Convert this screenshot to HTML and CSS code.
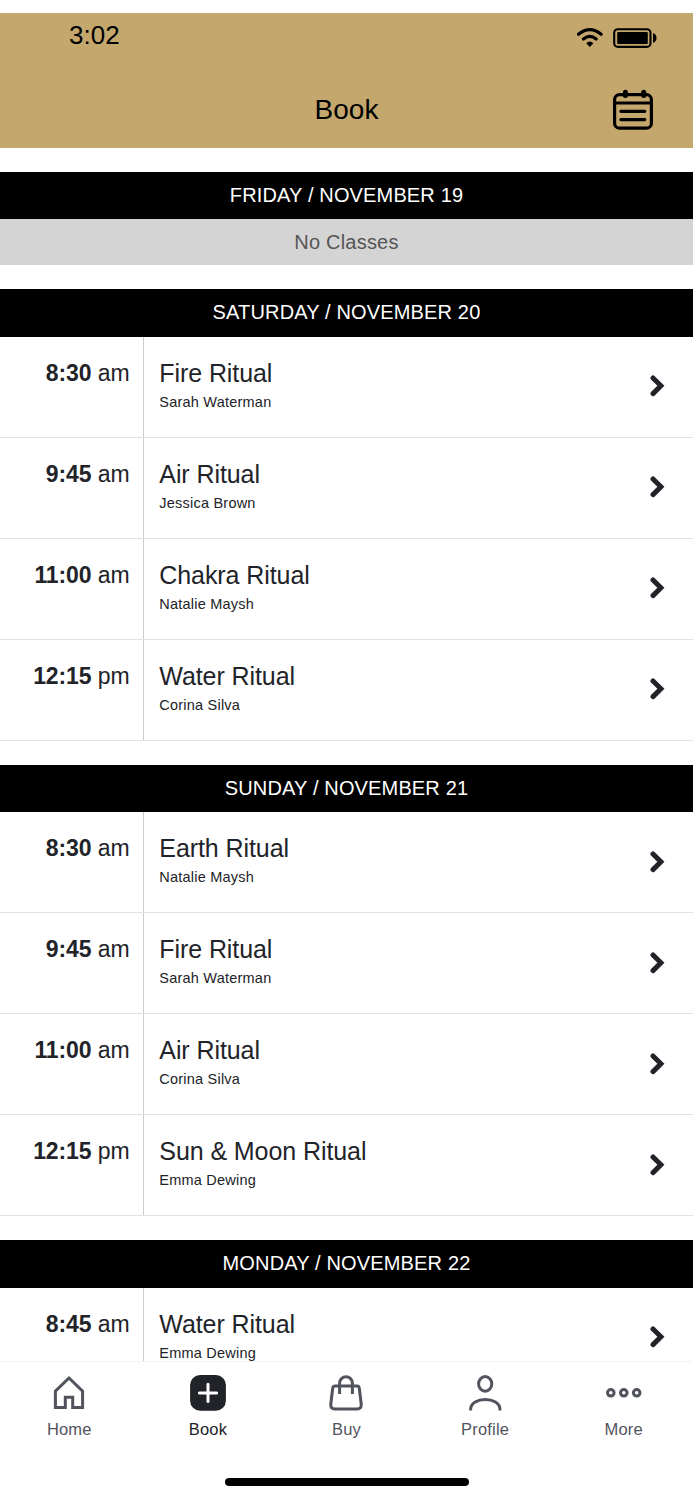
FILE: index.html
```
<!DOCTYPE html>
<html lang="en">
<head>
<meta charset="utf-8">
<title>Book</title>
<link rel="stylesheet" href="styles.css">
</head>
<body>
<div class="app">
  <header class="top">
    <div class="status">
      <span class="clock">3:02</span>
      <div class="status-icons">
        <svg width="27" height="21" viewBox="0 0 27 21" fill="none" stroke="#000" stroke-width="3.2" stroke-linecap="round">
          <path d="M1.5 7.3Q12.8-2 24.1 7.3"/>
          <path d="M6.4 12.1Q12.8 6.8 19.2 12.1"/>
          <path d="M9.2 16.2Q12.8 12.6 16.4 16.2L12.8 20Z" fill="#000" stroke="none"/>
        </svg>
        <svg width="44" height="20" viewBox="0 0 44 20">
          <rect x="1.2" y="1.2" width="36.3" height="17.7" rx="3.6" fill="none" stroke="#000" stroke-width="2.1"/>
          <rect x="4.2" y="4" width="30.6" height="12" rx="1" fill="#000"/>
          <path d="M40 5.3C42.2 5.6 43.5 7.7 43.5 10S42.2 14.4 40 14.7Z" fill="#000"/>
        </svg>
      </div>
    </div>
    <div class="titlebar">
      <h1>Book</h1>
      <svg class="calendar" width="42" height="42" viewBox="0 0 42 42" fill="none" stroke="#000" stroke-width="3.2" stroke-linecap="round">
        <rect x="2.6" y="5.6" width="36.8" height="33.6" rx="5"/>
        <path d="M3 14H39M8.9 22.3H32.8M8.9 30.6H32.8"/>
        <path d="M13.4 3.2V6.6M31.7 3.2V6.6" stroke-width="5"/>
      </svg>
    </div>
  </header>

  <main class="schedule">
    <section class="day">
      <h2>FRIDAY / NOVEMBER 19</h2>
      <p class="empty">No Classes</p>
    </section>
    <section class="day">
      <h2>SATURDAY / NOVEMBER 20</h2>
      <div class="row"><div class="time"><b>8:30</b> am</div><div class="info"><h3>Fire Ritual</h3><p>Sarah Waterman</p></div><svg class="chev" viewBox="0 0 16 22"><path d="M4 3L11.9 10.8L4 18.6"/></svg></div>
      <div class="row"><div class="time"><b>9:45</b> am</div><div class="info"><h3>Air Ritual</h3><p>Jessica Brown</p></div><svg class="chev" viewBox="0 0 16 22"><path d="M4 3L11.9 10.8L4 18.6"/></svg></div>
      <div class="row"><div class="time"><b>11:00</b> am</div><div class="info"><h3>Chakra Ritual</h3><p>Natalie Maysh</p></div><svg class="chev" viewBox="0 0 16 22"><path d="M4 3L11.9 10.8L4 18.6"/></svg></div>
      <div class="row"><div class="time"><b>12:15</b> pm</div><div class="info"><h3>Water Ritual</h3><p>Corina Silva</p></div><svg class="chev" viewBox="0 0 16 22"><path d="M4 3L11.9 10.8L4 18.6"/></svg></div>
    </section>
    <section class="day">
      <h2>SUNDAY / NOVEMBER 21</h2>
      <div class="row"><div class="time"><b>8:30</b> am</div><div class="info"><h3>Earth Ritual</h3><p>Natalie Maysh</p></div><svg class="chev" viewBox="0 0 16 22"><path d="M4 3L11.9 10.8L4 18.6"/></svg></div>
      <div class="row"><div class="time"><b>9:45</b> am</div><div class="info"><h3>Fire Ritual</h3><p>Sarah Waterman</p></div><svg class="chev" viewBox="0 0 16 22"><path d="M4 3L11.9 10.8L4 18.6"/></svg></div>
      <div class="row"><div class="time"><b>11:00</b> am</div><div class="info"><h3>Air Ritual</h3><p>Corina Silva</p></div><svg class="chev" viewBox="0 0 16 22"><path d="M4 3L11.9 10.8L4 18.6"/></svg></div>
      <div class="row"><div class="time"><b>12:15</b> pm</div><div class="info"><h3>Sun &amp; Moon Ritual</h3><p>Emma Dewing</p></div><svg class="chev" viewBox="0 0 16 22"><path d="M4 3L11.9 10.8L4 18.6"/></svg></div>
    </section>
    <section class="day">
      <h2>MONDAY / NOVEMBER 22</h2>
      <div class="row"><div class="time"><b>8:45</b> am</div><div class="info"><h3>Water Ritual</h3><p>Emma Dewing</p></div><svg class="chev" viewBox="0 0 16 22"><path d="M4 3L11.9 10.8L4 18.6"/></svg></div>
    </section>
  </main>

  <nav class="tabs">
    <a class="tab">
      <svg width="38" height="38" viewBox="0 0 38 38"><path d="M5.4 17.2L19 4L32.6 17.2V33.6H22.7V23.2H15.3V33.6H5.4Z"/></svg>
      <span>Home</span>
    </a>
    <a class="tab active">
      <svg width="38" height="38" viewBox="0 0 38 38"><rect class="tile" x="1.1" y="1" width="35.8" height="35.8" rx="10"/><path class="plus" d="M10.4 18.9H27.6M19 10.3V27.5"/></svg>
      <span>Book</span>
    </a>
    <a class="tab">
      <svg width="38" height="38" viewBox="0 0 38 38"><path d="M8 12H30Q32 12 32.3 14.2L34.2 30Q34.6 35 30.2 35H7.8Q3.4 35 3.8 30L5.7 14.2Q6 12 8 12Z"/><path d="M12.6 20V9A6.4 6.2 0 0 1 25.4 9V20"/></svg>
      <span>Buy</span>
    </a>
    <a class="tab">
      <svg width="38" height="38" viewBox="0 0 38 38"><ellipse cx="19.2" cy="9.9" rx="6.6" ry="7.3"/><path d="M4.6 36.5V35.5C4.6 22 34 22 34 35.5V36.5"/></svg>
      <span>Profile</span>
    </a>
    <a class="tab">
      <svg width="38" height="38" viewBox="0 0 38 38"><circle cx="5.8" cy="18.8" r="3.3"/><circle cx="18.8" cy="18.8" r="3.3"/><circle cx="31.7" cy="18.8" r="3.3"/></svg>
      <span>More</span>
    </a>
  </nav>
  <div class="home-indicator"></div>
</div>
</body>
</html>
```
FILE: styles.css
```
* { box-sizing: border-box; margin: 0; padding: 0; }
body { background: #fff; font-family: "Liberation Sans", Arial, sans-serif; color: #212328; }
.app { width: 693px; height: 1500px; padding-top: 12.5px; display: flex; flex-direction: column; overflow: hidden; }
svg { display: block; flex: none; }
h1, h2, h3 { font-weight: 400; }

.top { height: 135px; flex: none; background: #c3a76c; color: #000; }
.status { height: 50px; display: flex; align-items: center; justify-content: space-between; padding: 0 36px 0 69px; }
.clock { font-size: 26px; line-height: 30px; margin-top: -6px; }
.status-icons { display: flex; align-items: center; gap: 9px; }
.titlebar { height: 85px; display: grid; grid-template-columns: 1fr auto 1fr; align-items: center; padding: 0 39px; }
.titlebar h1 { grid-column: 2; font-size: 28px; line-height: 32px; margin-top: 10px; }
.calendar { justify-self: end; margin-top: 10px; }

.schedule { flex: 1; min-height: 0; overflow: hidden; padding-top: 24.4px; display: flex; flex-direction: column; gap: 24px; }
.day { flex: none; }
.day h2 { height: 47.5px; background: #000; color: #fff; text-align: center; font-size: 20px; line-height: 47.5px; letter-spacing: 0.15px; }
.empty { height: 45.75px; background: #d4d4d4; color: #555; text-align: center; font-size: 20px; line-height: 46px; letter-spacing: 0.2px; }
.row { height: 101px; display: grid; grid-template-columns: 144px 1fr 16px; padding-right: 28px; border-bottom: 1px solid #e2e3e5; }
.time { border-right: 1px solid #cbccd2; padding: 23.2px 13.5px 0 0; text-align: right; font-size: 23px; line-height: 27px; letter-spacing: -0.1px; }
.info { padding: 21.2px 0 0 15.3px; }
.info h3 { font-size: 25px; line-height: 30px; letter-spacing: -0.08px; }
.info p { font-size: 14.5px; line-height: 18px; letter-spacing: 0.22px; margin-top: 5px; }
.chev { width: 16px; height: 22px; margin-top: 38.5px; fill: none; stroke: #212328; stroke-width: 5; stroke-linecap: round; }

.tabs { height: 96px; flex: none; display: grid; grid-template-columns: repeat(5, 1fr); border-top: 1px solid #f3f3f4; color: #51535d; }
.tab { display: flex; flex-direction: column; align-items: center; padding-top: 12px; }
.tab svg { fill: none; stroke: #51535d; stroke-width: 3; }
.tab span { font-size: 16.5px; line-height: 20px; letter-spacing: 0.2px; margin-top: 7px; }
.tab.active { color: #212328; }
.tab .tile { fill: #212328; stroke: none; }
.tab .plus { stroke: #fff; stroke-linecap: round; }
.home-indicator { flex: none; width: 244px; height: 8px; border-radius: 4px; background: #000; margin: 21px auto 14px; }
```
